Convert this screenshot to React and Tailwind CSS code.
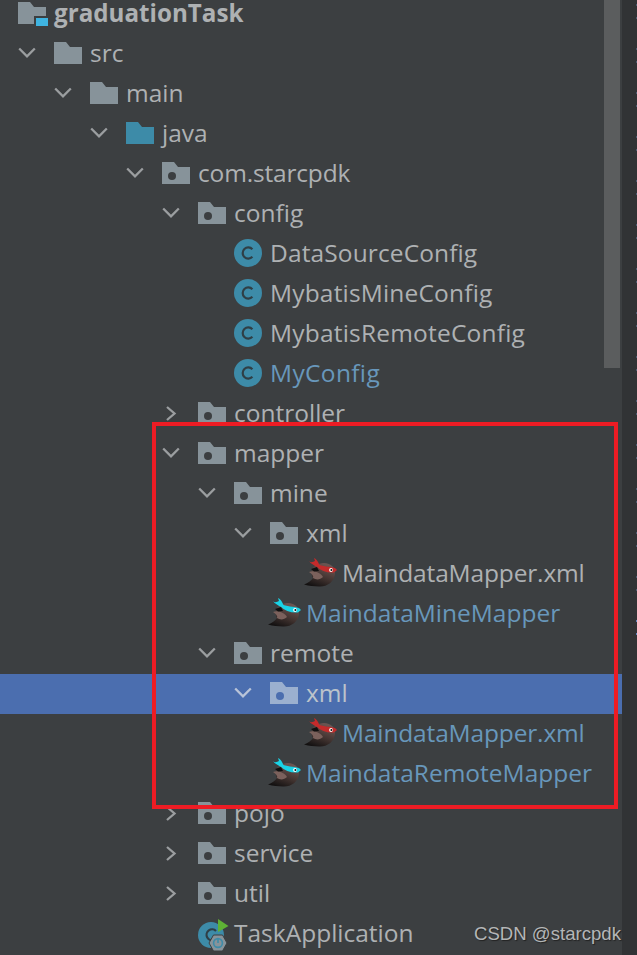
const ui = '"Open Sans","Noto Sans",sans-serif';

function Chevron({ open, color = "#9b9ea0" }) {
  return (
    <svg width="36" height="40" viewBox="0 0 36 40" className="shrink-0">
      {open ? (
        <path d="M1.2 15.5 L9 23.3 L16.8 15.5" fill="none" stroke={color} strokeWidth="2.3" />
      ) : (
        <path d="M5 14 L12.5 20.5 L5 27" fill="none" stroke={color} strokeWidth="2.3" />
      )}
    </svg>
  );
}

function Folder({ color = "#87939a", dot, dotColor = "#3c3f41" }) {
  return (
    <svg width="36" height="40" viewBox="0 0 36 40" className="shrink-0">
      <path d="M0 9 H12 L16 14 H28 V31 H0 Z" fill={color} />
      {dot && <circle cx="10" cy="23" r="4" fill={dotColor} />}
    </svg>
  );
}

function RootIcon() {
  return (
    <svg width="36" height="26" viewBox="0 7 36 26" className="shrink-0">
      <path d="M0 9 H12 L16 14 H28 V31 H0 Z" fill="#87939a" />
      <rect x="16" y="23" width="16" height="16" fill="#3c3f41" />
      <rect x="18" y="25" width="12" height="12" fill="#3fb4e1" />
    </svg>
  );
}

function ClassIcon() {
  return (
    <svg width="36" height="40" viewBox="0 0 36 40" className="shrink-0">
      <circle cx="14" cy="20" r="14" fill="#3d8ba8" />
      <path d="M18.4 16.2 A5.6 5.6 0 1 0 18.4 23.8" fill="none" stroke="#2f3f46" strokeWidth="2.2" />
    </svg>
  );
}

function Bird({ band, id }) {
  return (
    <svg width="36" height="40" viewBox="0 0 36 40" className="shrink-0 overflow-visible">
      <defs>
        <linearGradient id={id} x1="0.75" y1="0.1" x2="0.3" y2="1">
          <stop offset="0" stopColor="#6b5451" />
          <stop offset="0.55" stopColor="#40322f" />
          <stop offset="1" stopColor="#131111" />
        </linearGradient>
      </defs>
      <path d="M18 10 C25 10 30 15 29 21 C28 29 21 34 13 33.5 C8 33.2 3 33 -2 31.5 C2 30 5 28 7 25 C5 22 5 15 9 13 C12 11 15 10 18 10 Z" fill={`url(#${id})`} />
      <path d="M3 19 C8 17 15 20 17 24 C14 27 10 27 7 25 C8 23 6 21 3 19 Z" fill="#7b615c" />
      <path d="M5 16 L11 14 L13 18 L8 18.5 Z" fill="#0f0f0f" />
      <path d="M11 11 C17 14 23 13 29 15 L31 17 L28 19.5 C21 20 15 18 10 13 Z" fill={band} />
      <path d="M3 8 C5 10 7 9 9 8 L8 5 C10 6 11 7 12 9 L14 13 L10 13.5 C8 12 5 11 3 8 Z" fill={band} />
      <circle cx="25" cy="17" r="1.9" fill="#fff" />
      <circle cx="25.4" cy="17" r="1" fill="#111" />
    </svg>
  );
}

function SpringApp() {
  return (
    <svg width="36" height="40" viewBox="0 0 36 40" className="shrink-0">
      <circle cx="13" cy="22" r="13" fill="#3d8ba8" />
      <path d="M18 18 A5.5 5.5 0 1 0 16 27" fill="none" stroke="#2f3f46" strokeWidth="2.2" />
      <path d="M20 6 L30.5 13 L20 19 Z" fill="#5eb135" />
      <path d="M15.5 22 L24.5 22 L29 30 L24.5 38 L15.5 38 L11 30 Z" fill="#87939a" stroke="#3c3f41" strokeWidth="1" />
      <circle cx="20" cy="30" r="4.4" fill="none" stroke="#3d8ba8" strokeWidth="1.6" />
      <path d="M20 25.5 V30" stroke="#3d8ba8" strokeWidth="1.6" />
    </svg>
  );
}

function Row({ pad, chevron, icon, children, color = "text-[#aeb1b3]", track = "" }) {
  return (
    <div className={`flex h-10 items-center ${pad}`}>
      {chevron && <Chevron open={chevron === "open"} />}
      {icon}
      <span className={`whitespace-nowrap leading-10 ${color} ${track}`}>{children}</span>
    </div>
  );
}

const blue = "text-[#6897bb]";
const pkg = <Folder dot />;
const marks = Array.from({ length: 15 }, (_, k) => 4 + 44 * k);

export default function App() {
  return (
    <div className="relative h-[955px] w-[637px] overflow-hidden bg-[#3c3f41] text-[24.5px]" style={{ fontFamily: ui }}>
      <div className="flex h-full">
        <div className="w-[622px] shrink-0">
          <div className="flex h-[33px] items-start pl-[18px]">
            <RootIcon />
            <span className="whitespace-nowrap text-[24.2px] font-bold leading-[26px] text-[#aeb1b3]">graduationTask</span>
          </div>
          <Row pad="pl-[18px]" chevron="open" icon={<Folder />}>src</Row>
          <Row pad="pl-[54px]" chevron="open" icon={<Folder />}>main</Row>
          <Row pad="pl-[90px]" chevron="open" icon={<Folder color="#3d8ba8" />}>java</Row>
          <Row pad="pl-[126px]" chevron="open" icon={pkg} track="tracking-[-0.17px]">com.starcpdk</Row>
          <Row pad="pl-[162px]" chevron="open" icon={pkg}>config</Row>
          <Row pad="pl-[234px]" icon={<ClassIcon />} track="tracking-[0.12px]">DataSourceConfig</Row>
          <Row pad="pl-[234px]" icon={<ClassIcon />} track="tracking-[0.18px]">MybatisMineConfig</Row>
          <Row pad="pl-[234px]" icon={<ClassIcon />} track="tracking-[0.2px]">MybatisRemoteConfig</Row>
          <Row pad="pl-[234px]" icon={<ClassIcon />} color={blue} track="tracking-[0.35px]">MyConfig</Row>
          <Row pad="pl-[162px]" chevron="closed" icon={pkg}>controller</Row>
          <Row pad="pl-[162px]" chevron="open" icon={pkg}>mapper</Row>
          <Row pad="pl-[198px]" chevron="open" icon={pkg}>mine</Row>
          <Row pad="pl-[234px]" chevron="open" icon={pkg}>xml</Row>
          <Row pad="pl-[306px]" icon={<Bird band="#c42b2b" id="red1" />} track="tracking-[-0.15px]">MaindataMapper.xml</Row>
          <Row pad="pl-[270px]" icon={<Bird band="#19d3e6" id="cyan1" />} color={blue}>MaindataMineMapper</Row>
          <Row pad="pl-[198px]" chevron="open" icon={pkg}>remote</Row>
          <div className="-mb-px mt-px flex h-10 items-center bg-[#4b6eaf] pb-[2px] pl-[234px]">
            <Chevron open color="#b9c4d8" />
            <Folder dot color="#9bb0cf" dotColor="#4b6eaf" />
            <span className="whitespace-nowrap leading-10 text-[#bcc3cb]">xml</span>
          </div>
          <Row pad="pl-[306px]" icon={<Bird band="#c42b2b" id="red2" />} color={blue} track="tracking-[-0.15px]">MaindataMapper.xml</Row>
          <Row pad="pl-[270px]" icon={<Bird band="#19d3e6" id="cyan2" />} color={blue}>MaindataRemoteMapper</Row>
          <Row pad="pl-[162px]" chevron="closed" icon={pkg}>pojo</Row>
          <Row pad="pl-[162px]" chevron="closed" icon={pkg}>service</Row>
          <Row pad="pl-[162px]" chevron="closed" icon={pkg}>util</Row>
          <Row pad="pl-[198px]" icon={<SpringApp />}>TaskApplication</Row>
        </div>
        <div className="flex-1 bg-[#313335]" />
      </div>
      <div className="absolute left-[604px] top-0 h-[368px] w-4 bg-[#5b5d5e]" />
      {marks.map((y) => (
        <div key={y}>
          <div className={`absolute left-[636px] h-[2px] w-px ${y === 620 ? "bg-[#5f86c0]" : "bg-[#4a5a70]"}`} style={{ top: y }} />
          <div className={`absolute left-[636px] h-[2px] w-px ${y === 620 ? "bg-[#5f86c0]" : "bg-[#4a5a70]"}`} style={{ top: y + 13 }} />
        </div>
      ))}
      <div className="absolute left-[152px] top-[422px] h-[387px] w-[466px] border-4 border-[#ed1c24]" />
      <div className="absolute left-[474px] top-[922px] text-[18.6px] leading-6 text-[#b4b6b7] [text-shadow:1px_1px_1px_#222]" style={{ fontFamily: '"Liberation Sans",sans-serif' }}>CSDN @starcpdk</div>
    </div>
  );
}
